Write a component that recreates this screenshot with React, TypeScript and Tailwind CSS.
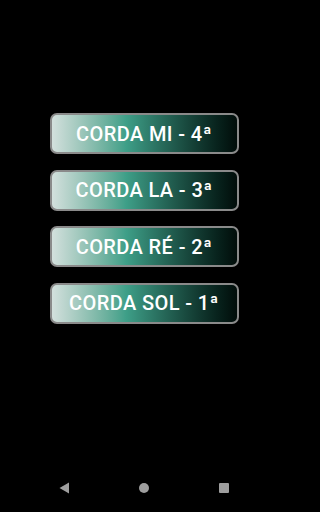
const strings = ['CORDA MI - 4ª', 'CORDA LA - 3ª', 'CORDA RÉ - 2ª', 'CORDA SOL - 1ª']

export default function App() {
  return (
    <div
      className="w-full h-screen bg-black"
      style={{ fontFamily: 'Roboto, "Liberation Sans", sans-serif' }}
    >
      <div className="w-[288px] h-full flex flex-col">
        {/* String buttons */}
        <div className="flex-1 flex flex-col items-center pt-[113px] gap-[15.5px]">
          {strings.map((s) => (
            <button
              key={s}
              className="w-[189px] h-[41px] shrink-0 rounded-[7px] border-2 border-[#8a8a8a] bg-gradient-to-r from-[#d3e0dd] via-[#3e9f88] via-40% to-[#020d0a] text-white text-[20px] font-medium tracking-[0.4px] leading-none flex items-center justify-center"
            >
              {s}
            </button>
          ))}
        </div>

        {/* Nav bar */}
        <div className="h-[48px] flex items-center justify-center">
          <div className="w-[80px] flex justify-center">
            <svg width="11" height="12" viewBox="0 0 11 12">
              <path d="M10 0.5 L10 11.5 L0.5 6 Z" fill="#9e9e9e" />
            </svg>
          </div>
          <div className="w-[80px] flex justify-center">
            <div className="w-[10px] h-[10px] rounded-full bg-[#9e9e9e]" />
          </div>
          <div className="w-[80px] flex justify-center">
            <div className="w-[10px] h-[10px] rounded-[1px] bg-[#9e9e9e]" />
          </div>
        </div>
      </div>
    </div>
  )
}
